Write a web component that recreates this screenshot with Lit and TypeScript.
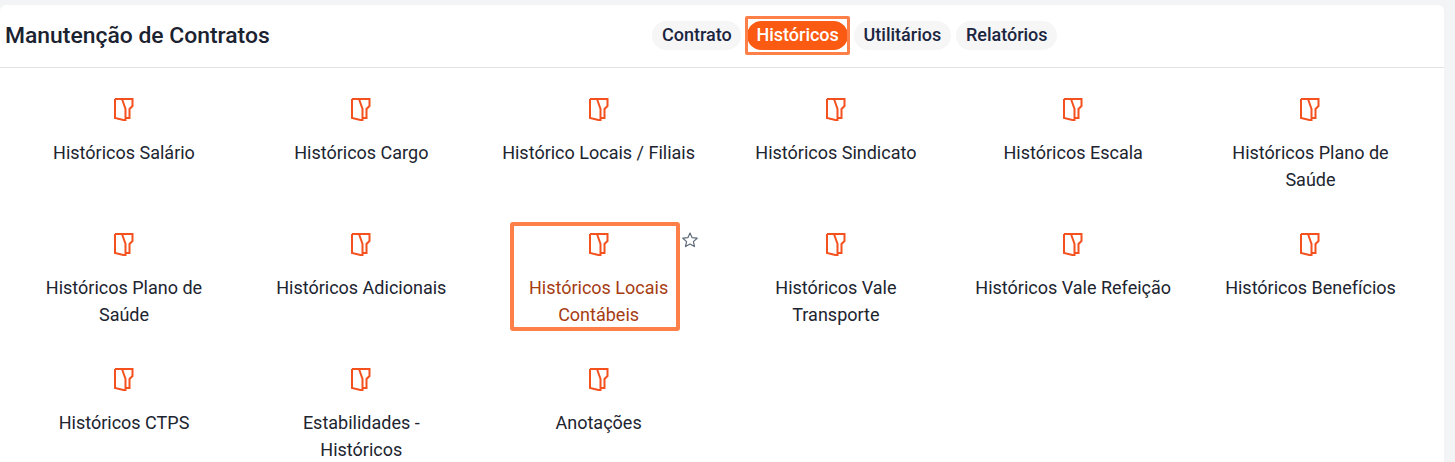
import { LitElement, html, css, nothing } from 'lit';
import { customElement } from 'lit/decorators.js';

const tabs = ['Contrato', 'Históricos', 'Utilitários', 'Relatórios'];
const items = [
  'Históricos Salário',
  'Históricos Cargo',
  'Histórico Locais / Filiais',
  'Históricos Sindicato',
  'Históricos Escala',
  'Históricos Plano de Saúde',
  'Históricos Plano de Saúde',
  'Históricos Adicionais',
  'Históricos Locais Contábeis',
  'Históricos Vale Transporte',
  'Históricos Vale Refeição',
  'Históricos Benefícios',
  'Históricos CTPS',
  'Estabilidades - Históricos',
  'Anotações',
];
const activeItem = 'Históricos Locais Contábeis';

@customElement('app-root')
export class AppRoot extends LitElement {
  static styles = css`
    :host {
      display: block;
      height: 462px;
      overflow: hidden;
      padding-top: 5px;
      box-sizing: border-box;
      background: #f3f4f6;
      font-family: Roboto, sans-serif;
      color: #1f2937;
    }

    .panel {
      height: 457px;
      margin-right: 11px;
      background: #fff;
      border-radius: 6px 6px 0 0;
    }

    .header {
      display: flex;
      align-items: center;
      height: 62px;
      padding: 0 5px;
      border-bottom: 1px solid #e2e3e5;
    }

    .title {
      width: 647.4px;
      font-size: 22.9px;
      font-weight: 500;
      color: #1b2230;
      margin-top: -1px;
    }

    .tabs {
      display: flex;
      gap: 5.5px;
      margin-top: -1px;
    }

    .tab {
      position: relative;
      height: 29px;
      line-height: 28px;
      padding: 0 9.6px;
      border-radius: 15px;
      background: #f6f6f7;
      font-size: 18px;
      font-weight: 500;
      color: #1b2540;
    }

    .tab.active {
      background: #fa5a11;
      color: #fff;
    }

    .tab.active::after {
      content: '';
      position: absolute;
      inset: -5px -2px;
      border: 3px solid #ff7f48;
      border-radius: 2px;
    }

    .grid {
      display: grid;
      grid-template-columns: repeat(6, 200px);
      column-gap: 37.3px;
      grid-auto-rows: 135px;
      padding: 29px 0 0 24px;
    }

    .item {
      position: relative;
      display: flex;
      flex-direction: column;
      align-items: center;
      text-align: center;
      font-size: 18px;
      line-height: 27px;
      color: #20242f;
    }

    .item svg.doc {
      display: block;
      width: 24px;
      height: 24px;
      margin-bottom: 18px;
    }

    .item.active {
      color: #a63c12;
    }

    .item.active::before {
      content: '';
      position: absolute;
      left: 11.4px;
      top: -10px;
      width: 170.5px;
      height: 109px;
      box-sizing: border-box;
      border: 4px solid #ff7f48;
      border-radius: 3px;
    }

    .star {
      position: absolute;
      left: 182px;
      top: -1px;
      width: 18px;
      height: 18px;
    }
  `;

  render() {
    return html`
      <div class="panel">
        <div class="header">
          <div class="title">Manutenção de Contratos</div>
          <div class="tabs">
            ${tabs.map(
              (tab) =>
                html`<div class="tab ${tab === 'Históricos' ? 'active' : ''}">${tab}</div>`
            )}
          </div>
        </div>
        <div class="grid">
          ${items.map((item) => {
            const active = item === activeItem;
            return html`
              <div class="item ${active ? 'active' : ''}">
                <svg class="doc" viewBox="0 0 24 24" fill="none" stroke="#f4511e" stroke-width="2">
                  <path d="M3 2h17.5v7l-3 3v9h-4" />
                  <path d="M3 2v19l10.5 2.5V12L10 2" />
                </svg>
                <span>${item}</span>
                ${active
                  ? html`<svg class="star" viewBox="0 0 18 18" fill="none" stroke="#5f6b7a" stroke-width="1.2" stroke-linejoin="round">
                      <path d="M9 2l2.1 4.7 5.1.5-3.8 3.4 1.1 5L9 13l-4.5 2.6 1.1-5-3.8-3.4 5.1-.5z" />
                    </svg>`
                  : nothing}
              </div>
            `;
          })}
        </div>
      </div>
    `;
  }
}
